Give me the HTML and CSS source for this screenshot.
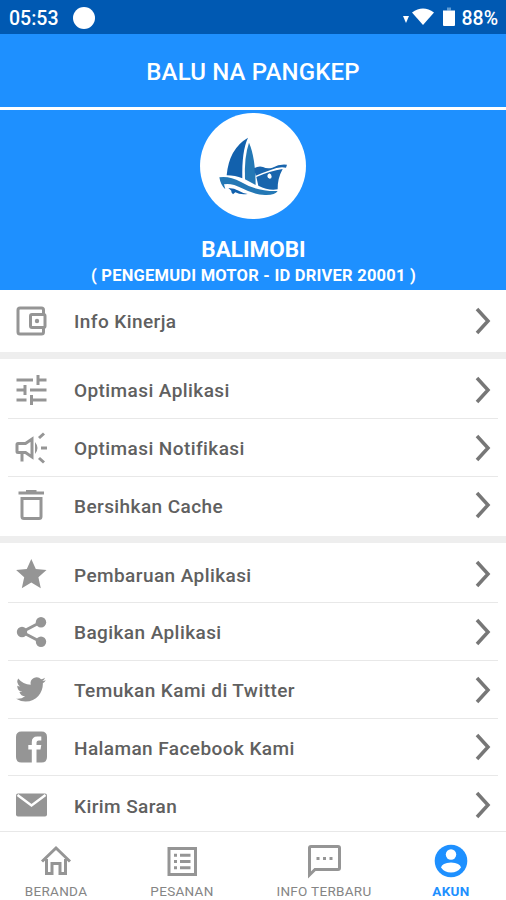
FILE: index.html
```html
<!DOCTYPE html>
<html lang="id">

<head>
    <meta charset="UTF-8">
    <meta name="viewport" content="width=device-width, initial-scale=1.0">
    <title>Akun</title>
    <link rel="stylesheet" href="styles.css">
</head>

<body>
    <div class="status-bar">
        <span class="time">05:53</span>
        <span class="dot"></span>
        <svg class="status-icons" width="60" height="24" viewBox="0 0 60 24">
            <path d="M6 10h6l-3 7z" fill="#fff" />
            <path d="M15 6.500q11-8 22 0L26 19z" fill="#fff" />
            <path d="M50 1.500h4v3h-4z" fill="#5f9bd3" />
            <path d="M46 4.500h12V19q0 1-1 1H47q-1 0-1-1z" fill="#fff" />
        </svg>
        <span class="battery">88%</span>
    </div>
    <header class="toolbar"><h1>BALU NA PANGKEP</h1></header>

    <section class="profile">
        <svg class="avatar" viewBox="31 23 318 318">
            <circle cx="190" cy="182" r="159" fill="#fff" />
            <path d="M175 97Q118 130 111 210Q137 210 158 219Q156 137 175 97z" fill="#1261ad" />
            <path d="M178 112Q163 155 166 222L198 239Q197 155 178 112z" fill="#2478b5" />
            <path d="M193 189Q207 181 220 185Q232 191 248 187Q270 175 292 178L289 187Q267 183 243 194Q220 202 198 211z" fill="#1965ad" />
            <path d="M200 215Q240 197 279 191Q263 220 264 252Q237 257 206 241z" fill="#1965ad" />
            <path d="M239 204q7 2 7 10q0 6-6 6q-7-1-7-8q0-5 6-8z" fill="#fff" />
            <path d="M89 216Q118 211 154 230Q202 259 264 257Q256 270 226 269Q191 267 157 249Q125 232 103 237L107 252Q93 240 89 216z" fill="#2478b5" />
            <path d="M116 248Q135 249 147 256Q158 263 174 266Q151 269 137 261L130 267Q123 260 125 256z" fill="#1261ad" />
        </svg>
        <h2 class="name">BALIMOBI</h2>
        <p class="driver-id">( PENGEMUDI MOTOR - ID DRIVER 20001 )</p>
    </section>

    <main class="menu">
        <div class="group group-info">
            <a class="item">
                <svg class="icon" viewBox="0 0 36 36">
                    <path d="M30.500 11V7q0-2-2-2H7Q5 5 5 7v22q0 2 2 2h21.500q2 0 2-2v-4" class="line" />
                    <rect x="17.500" y="11.500" width="14.500" height="13" rx="1.500" class="line" />
                    <circle cx="24" cy="18" r="2.200" />
                </svg>
                <span>Info Kinerja</span>
                <svg class="chevron" viewBox="0 0 16 28"><path d="M2 2l11 12L2 26" /></svg>
            </a>
        </div>

        <div class="group">
            <a class="item">
                <svg class="icon" viewBox="0 0 36 36">
                    <path d="M3.500 8H20M25 8h8.500M25 3v10M3.500 18h9M12 13v10M17 18h16.500M3.500 28h10M18.500 28h15M18.500 23v10" class="line" />
                </svg>
                <span>Optimasi Aplikasi</span>
                <svg class="chevron" viewBox="0 0 16 28"><path d="M2 2l11 12L2 26" /></svg>
            </a>
            <a class="item">
                <svg class="icon" viewBox="0 0 36 36">
                    <path d="M5 13.500h7.500L19 9v18l-6.500-4.500H5q-1 0-1-1v-7q0-1 1-1zM9 23v8.500" class="line" />
                    <path d="M22 12q5 6 0 12z" />
                    <path d="M26 8l5-4.500M28 18h6M26 28l5 4.500" class="line" />
                </svg>
                <span>Optimasi Notifikasi</span>
                <svg class="chevron" viewBox="0 0 16 28"><path d="M2 2l11 12L2 26" /></svg>
            </a>
            <a class="item">
                <svg class="icon" viewBox="0 0 36 36">
                    <path d="M5.500 6H31M13 4.500h10.500M9 11.500h19v18q0 2-2 2H11q-2 0-2-2z" class="line" />
                </svg>
                <span>Bersihkan Cache</span>
                <svg class="chevron" viewBox="0 0 16 28"><path d="M2 2l11 12L2 26" /></svg>
            </a>
        </div>

        <div class="group">
            <a class="item">
                <svg class="icon" viewBox="0 0 36 36">
                    <path d="M18.300 3l4.500 10 10.700 1.100-8.100 7.200 2.400 11-9.500-5.700-9.500 5.700 2.400-11-8.100-7.200 10.700-1.100z" />
                </svg>
                <span>Pembaruan Aplikasi</span>
                <svg class="chevron" viewBox="0 0 16 28"><path d="M2 2l11 12L2 26" /></svg>
            </a>
            <a class="item">
                <svg class="icon" viewBox="0 0 36 36">
                    <path d="M28 8L9 18l19 10" class="line" />
                    <circle cx="28" cy="8.200" r="5.200" />
                    <circle cx="9" cy="18" r="5.200" />
                    <circle cx="28" cy="27.800" r="5.200" />
                </svg>
                <span>Bagikan Aplikasi</span>
                <svg class="chevron" viewBox="0 0 16 28"><path d="M2 2l11 12L2 26" /></svg>
            </a>
            <a class="item">
                <svg class="icon" viewBox="-2.500 -2 29 29">
                    <path d="M23.950 4.570a10 10 0 0 1-2.820.780 4.960 4.960 0 0 0 2.160-2.730c-.950.560-2 .960-3.130 1.190a4.920 4.920 0 0 0-8.380 4.480C7.690 8.100 4.070 6.130 1.640 3.160a4.920 4.920 0 0 0 1.520 6.580 4.900 4.900 0 0 1-2.230-.620v.060a4.920 4.920 0 0 0 3.950 4.830 5 5 0 0 1-2.210.080 4.940 4.940 0 0 0 4.600 3.420A9.870 9.870 0 0 1 0 19.540a13.990 13.990 0 0 0 7.550 2.210c9.050 0 14-7.500 14-13.980 0-.210 0-.420-.020-.630a9.940 9.940 0 0 0 2.420-2.570z" />
                </svg>
                <span>Temukan Kami di Twitter</span>
                <svg class="chevron" viewBox="0 0 16 28"><path d="M2 2l11 12L2 26" /></svg>
            </a>
            <a class="item">
                <svg class="icon" viewBox="0 0 36 36">
                    <path d="M8.500 2.500h20q5.500 0 5.500 5.500v20q0 5.500-5.500 5.500h-5V20.500h4l.8-4.500h-4.800v-2.500q0-2 2.300-2h2.500V7.500h-4q-5.500 0-5.500 5.500v3h-3.500v4.500h3.500v13H8.500Q3 33.500 3 28V8q0-5.500 5.500-5.500z" />
                </svg>
                <span>Halaman Facebook Kami</span>
                <svg class="chevron" viewBox="0 0 16 28"><path d="M2 2l11 12L2 26" /></svg>
            </a>
            <a class="item">
                <svg class="icon" viewBox="0 0 36 36">
                    <rect x="3" y="6.500" width="31" height="23" rx="2" />
                    <path d="M4.500 8l14 10.500L32.500 8" class="flap" />
                </svg>
                <span>Kirim Saran</span>
                <svg class="chevron" viewBox="0 0 16 28"><path d="M2 2l11 12L2 26" /></svg>
            </a>
        </div>
    </main>

    <nav class="bottom-nav">
        <a class="tab">
            <svg viewBox="0 0 36 36">
                <path d="M4 18.500L18 5l14 13.500M8.500 16v14.500h5.500V20.500h8v10h5.500V16" class="line" />
            </svg>
            <span>BERANDA</span>
        </a>
        <a class="tab">
            <svg viewBox="0 0 36 36">
                <path d="M5 5.500h26.500v26H5z" class="line" />
                <path d="M10 12.300h3M16 12.300h10.500M10 18.500h3M16 18.500h10.500M10 24.800h3M16 24.800h10.500" class="line" />
            </svg>
            <span>PESANAN</span>
        </a>
        <a class="tab tab-wide">
            <svg viewBox="0 0 36 36">
                <path d="M3.500 32V5q0-1.500 1.500-1.500h27q1.500 0 1.500 1.500v20q0 1.500-1.500 1.500H9z" class="line" />
                <path d="M10.500 15.500h3M17 15.500h3M23.500 15.500h3" class="line" />
            </svg>
            <span>INFO TERBARU</span>
        </a>
        <a class="tab active">
            <svg viewBox="0 0 36 36">
                <circle cx="18" cy="18" r="16.300" />
                <circle cx="18" cy="11.500" r="5.200" fill="#fff" />
                <path d="M8 24.500q1-4.500 10-5 9 .5 10 5-3.500 5-10 5t-10-5z" fill="#fff" />
            </svg>
            <span>AKUN</span>
        </a>
    </nav>
</body>

</html>
```
FILE: styles.css
```css
* {
    box-sizing: border-box;
}

body {
    display: flex;
    flex-direction: column;
    height: 900px;
    margin: 0;
    overflow: hidden;
    background-color: #fff;
    font-family: Roboto, Arial, sans-serif;
}

h1, h2, p {
    margin: 0;
}

.status-bar {
    display: flex;
    align-items: center;
    flex: none;
    height: 34px;
    padding: 2px 8px 0 9px;
    background-color: #0059b2;
    color: #fff;
    font-size: 19.500px;
    font-weight: 500;
}

.dot {
    width: 22px;
    height: 22px;
    margin-left: 15px;
    border-radius: 50%;
    background-color: #fff;
}

.status-icons {
    margin-left: auto;
    margin-right: 4px;
}

.toolbar {
    display: flex;
    align-items: center;
    justify-content: center;
    flex: none;
    height: 76px;
    padding-top: 2px;
    border-bottom: 3px solid #fff;
    background-color: #1e90ff;
    color: #fff;
}

.toolbar h1 {
    font-size: 24px;
    font-weight: 500;
    letter-spacing: 0.150px;
}

.profile {
    display: flex;
    flex-direction: column;
    align-items: center;
    flex: none;
    height: 180px;
    padding-top: 3px;
    background-color: #1e90ff;
    color: #fff;
}

.avatar {
    width: 106px;
    height: 106px;
}

.name {
    margin-top: 16px;
    padding-left: 1px;
    font-size: 22.500px;
    font-weight: 700;
    line-height: 28px;
}

.driver-id {
    padding-left: 1px;
    font-size: 16.500px;
    font-weight: 700;
    letter-spacing: 0.230px;
    line-height: 25px;
}

.menu {
    flex: 1;
    min-height: 0;
    overflow: hidden;
}

.group {
    padding: 2px 8px;
    border-top: 7px solid #eee;
}

.group-info {
    height: 62px;
    border-top: none;
}

.item {
    display: flex;
    align-items: center;
    height: 57.750px;
    padding: 1px 7px 0 5px;
    border-bottom: 1px solid #e8e8e8;
    color: #606060;
    font-size: 19px;
    font-weight: 500;
    letter-spacing: 0.420px;
}

.item span {
    padding-top: 2px;
}

.item:last-child {
    border-bottom-color: transparent;
}

.icon {
    width: 36px;
    height: 36px;
    margin-right: 25px;
    fill: #959595;
}

.line {
    fill: none;
    stroke: #959595;
    stroke-width: 3;
}

.flap {
    fill: none;
    stroke: #fff;
    stroke-width: 2.500;
}

.chevron {
    width: 16px;
    height: 28px;
    margin-left: auto;
    fill: none;
    stroke: #777;
    stroke-width: 3.500;
}

.bottom-nav {
    display: flex;
    flex: none;
    height: 69px;
    border-top: 1px solid #e8e8e8;
}

.tab {
    display: flex;
    flex-direction: column;
    align-items: center;
    width: 112px;
    padding-top: 11px;
    color: #858585;
    font-size: 13.500px;
    letter-spacing: 0.300px;
}

.tab:nth-child(2) {
    width: 140px;
}

.tab-wide {
    width: 144px;
}

.tab svg {
    width: 36px;
    height: 36px;
    margin-bottom: 4px;
}

.tab.active {
    flex: 1;
    color: #1e90ff;
    fill: #1e90ff;
    font-weight: 700;
}
```
